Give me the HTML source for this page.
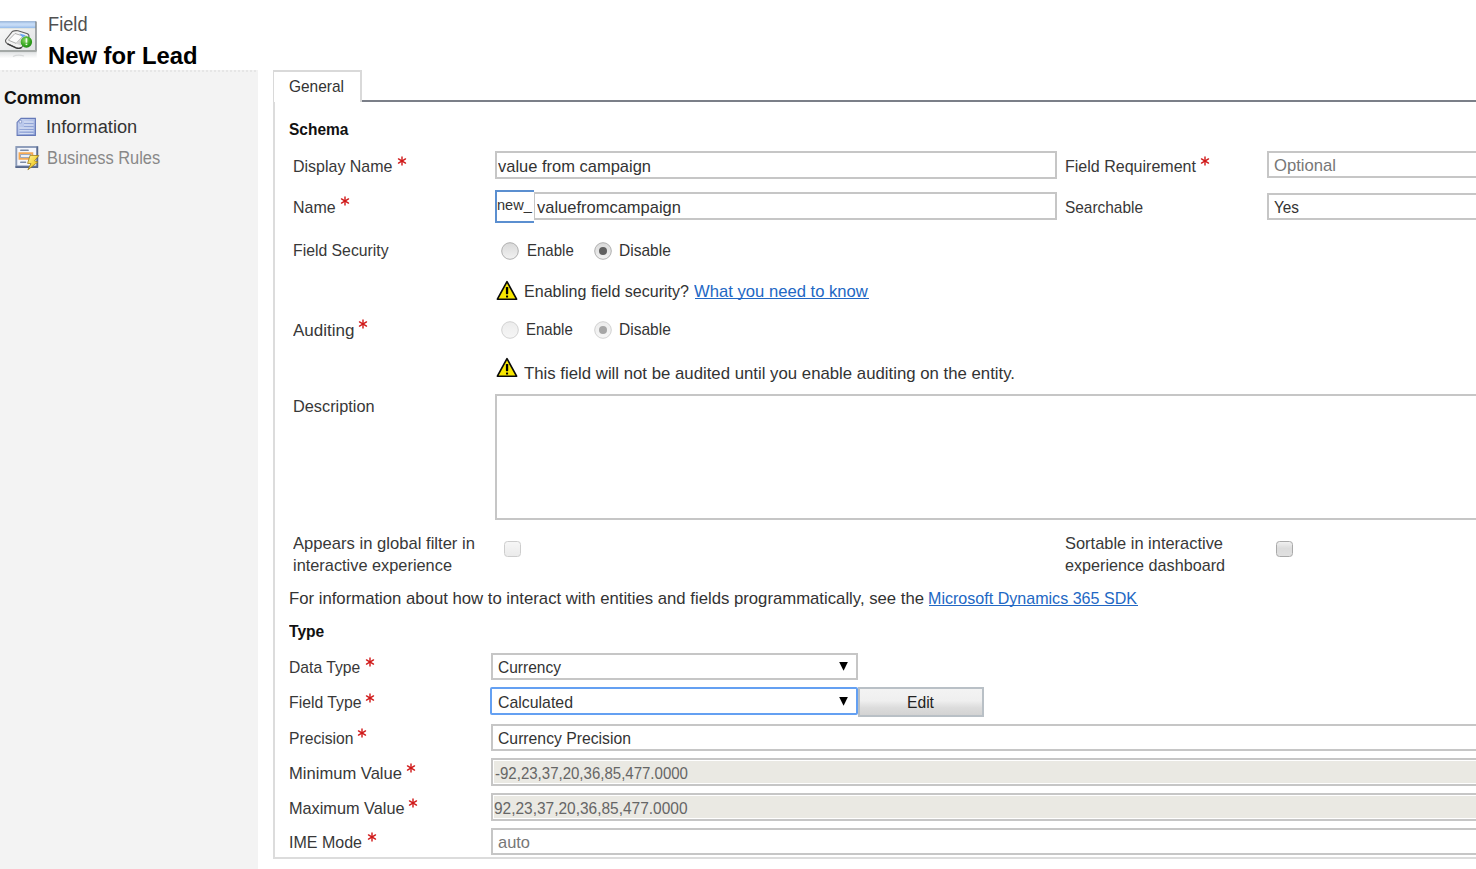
<!DOCTYPE html>
<html><head><meta charset="utf-8"><style>
html,body{margin:0;padding:0;background:#fff;width:1476px;height:869px;overflow:hidden;position:relative;}
body{font-family:"Liberation Sans",sans-serif;}
.t{position:absolute;white-space:nowrap;}
</style></head><body>
<svg style="position:absolute;left:0;top:19px" width="40" height="42" viewBox="0 19 40 42">
<defs>
<linearGradient id="tb" x1="0" y1="0" x2="0" y2="1"><stop offset="0" stop-color="#b4d0f2"/><stop offset="0.5" stop-color="#c9ddf6"/><stop offset="1" stop-color="#8db6e8"/></linearGradient>
<linearGradient id="bd" x1="0" y1="0" x2="1" y2="1"><stop offset="0" stop-color="#fafafa"/><stop offset="1" stop-color="#e0e2e4"/></linearGradient>
<linearGradient id="rf" x1="0" y1="0" x2="0" y2="1"><stop offset="0" stop-color="#e2e4e5"/><stop offset="1" stop-color="#ffffff"/></linearGradient>
<radialGradient id="gr" cx="0.4" cy="0.35" r="0.75"><stop offset="0" stop-color="#8ad866"/><stop offset="0.6" stop-color="#34a51f"/><stop offset="1" stop-color="#1b7e10"/></radialGradient>
</defs>
<rect x="-1" y="21.5" width="37" height="29" fill="url(#bd)"/>
<rect x="-1" y="21.5" width="37" height="7" fill="url(#tb)"/>
<rect x="-1" y="21.3" width="37" height="1" fill="#8fabd0"/>
<rect x="-1" y="28.4" width="37" height="0.8" fill="#f4eedc"/>
<rect x="35.3" y="21.5" width="1.4" height="29.5" fill="#7f8588"/>
<rect x="-1" y="50" width="37.7" height="2.4" fill="#a4a9a7"/>
<rect x="-1" y="52.4" width="37.7" height="6" fill="url(#rf)"/>
<path d="M13 56.5 Q18 54 24 56" fill="none" stroke="#d6d8d9" stroke-width="1.2"/>
<path d="M5.6 40 L12.2 31.6 Q15 30.2 18 30.8 L27.5 33.8 Q29.5 35 28.8 37.5 L21.5 47.5 Q19.5 49 16 47.8 L7.5 43.8 Q5 42.3 5.6 40 Z" fill="#f3f3f3" stroke="#606060" stroke-width="1.1"/>
<path d="M8.4 40.2 L15 33.5 L23 36 L16.2 43.4 Z" fill="#fbfbfb" stroke="#9a9a9a" stroke-width="0.8"/>
<path d="M16.2 43.4 L23 36 L27.6 35.2 L20.8 45.5 Z" fill="#d6d6d6"/>
<path d="M19.5 33.6 L25.8 35.3 L22.6 37.4 Z" fill="#6aa6f4"/>
<path d="M7.5 43.8 L16 47.8 Q19.5 49 21.5 47.5" fill="none" stroke="#3a3a3a" stroke-width="1.4"/>
<circle cx="26.4" cy="42" r="5.7" fill="url(#gr)"/>
<rect x="25.6" y="38.2" width="1.7" height="4.5" fill="#eaf8e6"/>
<rect x="25.6" y="43.7" width="1.7" height="1.4" fill="#eaf8e6"/>
</svg>
<div class="t" style="left:48.20px;top:11.57px;font-size:20px;line-height:25.00px;color:#505050;transform:scaleX(0.9124);transform-origin:0.00px 0;">Field</div>
<div class="t" style="left:47.80px;top:42.05px;font-size:23px;line-height:28.75px;color:#000;font-weight:bold;transform:scaleX(1.0360);transform-origin:0.00px 0;">New for Lead</div>
<div style="position:absolute;left:0px;top:70px;width:258px;height:799px;box-sizing:border-box;background:#f3f3f3;"></div>
<div style="position:absolute;left:2px;top:70px;width:256px;height:2px;box-sizing:border-box;background:repeating-linear-gradient(90deg,#e6e6e6 0 2px,transparent 2px 4px);"></div>
<div class="t" style="left:4.00px;top:86.71px;font-size:18px;line-height:22.50px;color:#111;font-weight:bold;transform:scaleX(0.9846);transform-origin:0.00px 0;">Common</div>
<svg style="position:absolute;left:14px;top:115px" width="28" height="58" viewBox="14 115 28 58">
<defs><linearGradient id="ig" x1="0" y1="0" x2="1" y2="1"><stop offset="0" stop-color="#cdd8f2"/><stop offset="1" stop-color="#93a8dc"/></linearGradient>
<linearGradient id="bolt" x1="0" y1="0" x2="1" y2="1"><stop offset="0" stop-color="#fff3a0"/><stop offset="0.5" stop-color="#f5d742"/><stop offset="1" stop-color="#d9a81c"/></linearGradient></defs>
<path d="M21 118.4 L35.4 118.4 L35.4 135.4 L17.1 135.4 L17.1 122.4 Z" fill="url(#ig)" stroke="#6579b8" stroke-width="1.1"/>
<path d="M19.2 120.4 L21.6 120.4 L21.6 123 L19.2 123 Z" fill="#eef2fb" stroke="#7083bd" stroke-width="0.6"/>
<rect x="24" y="121.6" width="9.5" height="1.2" fill="#e8eefa"/><rect x="24" y="122.8" width="9.5" height="0.8" fill="#7f93cc"/>
<rect x="24" y="124.6" width="9.5" height="1.2" fill="#e8eefa"/><rect x="24" y="125.8" width="9.5" height="0.8" fill="#7f93cc"/>
<rect x="19.5" y="127.6" width="14" height="1.2" fill="#e8eefa"/><rect x="19.5" y="128.8" width="14" height="0.8" fill="#7f93cc"/>
<rect x="19.5" y="130.4" width="14" height="1.2" fill="#e8eefa"/><rect x="19.5" y="131.6" width="14" height="0.8" fill="#7f93cc"/>
<rect x="19.5" y="133.0" width="14" height="0.8" fill="#dfe6f7"/>
<rect x="16.3" y="147" width="21" height="19.4" fill="#f4f6fc" stroke="#8a9ab8" stroke-width="1.9"/>
<path d="M37.3 146.5 L37.3 167.1 L15.4 167.1" fill="none" stroke="#56678b" stroke-width="1.6"/>
<rect x="20.1" y="149.6" width="8.7" height="1.4" rx="0.6" fill="#7d8ba5"/>
<rect x="19.5" y="153.2" width="12.8" height="5.6" fill="none" stroke="#f5aa55" stroke-width="1.9"/>
<rect x="20.6" y="154.6" width="10" height="2.8" fill="#eef1f7" stroke="#8c9ab3" stroke-width="0.8"/>
<rect x="20.1" y="161.6" width="6.1" height="1.4" rx="0.6" fill="#7d8ba5"/>
<path d="M30.1 155.3 L38.8 155.6 L34.5 160.8 L37.8 162 L27.9 169.8 L31 163.6 L27.6 163.4 Z" fill="url(#bolt)" stroke="#9b7a1a" stroke-width="0.8" stroke-linejoin="round"/>
</svg>
<div class="t" style="left:46.40px;top:115.51px;font-size:18px;line-height:22.50px;color:#333;transform:scaleX(1.0133);transform-origin:0.00px 0;">Information</div>
<div class="t" style="left:46.50px;top:147.21px;font-size:18px;line-height:22.50px;color:#888;transform:scaleX(0.9122);transform-origin:0.00px 0;">Business Rules</div>
<div style="position:absolute;left:273px;top:70px;width:89px;height:32px;box-sizing:border-box;border-top:2px solid #d9d9d9;border-left:1px solid #d9d9d9;border-right:2px solid #d9d9d9;background:#fff;"></div>
<div style="position:absolute;left:362px;top:100px;width:1114px;height:2px;box-sizing:border-box;background:#7b7f88;"></div>
<div style="position:absolute;left:273px;top:102px;width:1227px;height:757px;box-sizing:border-box;border-left:2px solid #dcdcdc;border-bottom:2px solid #dcdcdc;"></div>
<div class="t" style="left:288.90px;top:76.08px;font-size:17px;line-height:21.25px;color:#333;transform:scaleX(0.9091);transform-origin:0.00px 0;">General</div>
<div class="t" style="left:288.90px;top:119.28px;font-size:17px;line-height:21.25px;color:#111;font-weight:bold;transform:scaleX(0.9112);transform-origin:0.00px 0;">Schema</div>
<div class="t" style="left:293.40px;top:156.28px;font-size:17px;line-height:21.25px;color:#383838;transform:scaleX(0.9395);transform-origin:0.00px 0;">Display Name</div>
<svg style="position:absolute;left:396.30px;top:154.50px" width="12" height="12" viewBox="-6 -6 12 12"><g stroke="#d01818" stroke-width="1.4" stroke-linecap="round"><line x1="0" y1="-4.0" x2="0" y2="4.0"/><line x1="-3.5" y1="-2.05" x2="3.5" y2="2.05"/><line x1="-3.5" y1="2.05" x2="3.5" y2="-2.05"/></g></svg>
<div style="position:absolute;left:495px;top:151px;width:562px;height:28px;box-sizing:border-box;border:2px solid #c6c6c6;background:#fff;"></div>
<div class="t" style="left:498.30px;top:155.88px;font-size:17px;line-height:21.25px;color:#333;transform:scaleX(0.9696);transform-origin:0.00px 0;">value from campaign</div>
<div class="t" style="left:1065.10px;top:156.28px;font-size:17px;line-height:21.25px;color:#383838;transform:scaleX(0.9431);transform-origin:0.00px 0;">Field Requirement</div>
<svg style="position:absolute;left:1199.30px;top:154.50px" width="12" height="12" viewBox="-6 -6 12 12"><g stroke="#d01818" stroke-width="1.4" stroke-linecap="round"><line x1="0" y1="-4.0" x2="0" y2="4.0"/><line x1="-3.5" y1="-2.05" x2="3.5" y2="2.05"/><line x1="-3.5" y1="2.05" x2="3.5" y2="-2.05"/></g></svg>
<div style="position:absolute;left:1267px;top:151px;width:233px;height:27px;box-sizing:border-box;border:2px solid #c6c6c6;background:#fff;"></div>
<div class="t" style="left:1274.40px;top:155.28px;font-size:17px;line-height:21.25px;color:#777;transform:scaleX(0.9795);transform-origin:0.00px 0;">Optional</div>
<div class="t" style="left:293.40px;top:197.28px;font-size:17px;line-height:21.25px;color:#383838;transform:scaleX(0.9382);transform-origin:0.00px 0;">Name</div>
<svg style="position:absolute;left:339.20px;top:195.40px" width="12" height="12" viewBox="-6 -6 12 12"><g stroke="#d01818" stroke-width="1.4" stroke-linecap="round"><line x1="0" y1="-4.0" x2="0" y2="4.0"/><line x1="-3.5" y1="-2.05" x2="3.5" y2="2.05"/><line x1="-3.5" y1="2.05" x2="3.5" y2="-2.05"/></g></svg>
<div style="position:absolute;left:533px;top:192px;width:524px;height:28px;box-sizing:border-box;border:2px solid #c6c6c6;background:#fff;"></div>
<div style="position:absolute;left:495px;top:190px;width:38.5px;height:33px;box-sizing:border-box;border:2px solid #5b8fd0;border-right:none;background:#fff;"></div>
<div class="t" style="left:497.00px;top:196.22px;font-size:15px;line-height:18.75px;color:#333;transform:scaleX(0.9695);transform-origin:0.00px 0;">new_</div>
<div class="t" style="left:536.60px;top:197.28px;font-size:17px;line-height:21.25px;color:#333;transform:scaleX(0.9704);transform-origin:0.00px 0;">valuefromcampaign</div>
<div class="t" style="left:1065.10px;top:197.28px;font-size:17px;line-height:21.25px;color:#383838;transform:scaleX(0.9070);transform-origin:0.00px 0;">Searchable</div>
<div style="position:absolute;left:1267px;top:193px;width:233px;height:27px;box-sizing:border-box;border:2px solid #c6c6c6;background:#fff;"></div>
<div class="t" style="left:1274.40px;top:197.28px;font-size:17px;line-height:21.25px;color:#333;transform:scaleX(0.9025);transform-origin:0.00px 0;">Yes</div>
<div class="t" style="left:293.40px;top:239.98px;font-size:17px;line-height:21.25px;color:#383838;transform:scaleX(0.9282);transform-origin:0.00px 0;">Field Security</div>
<svg style="position:absolute;left:499.9px;top:240.9px" width="20" height="20"><defs><linearGradient id="rg509250" x1="0" y1="0" x2="0" y2="1"><stop offset="0" stop-color="#d9d9d9"/><stop offset="1" stop-color="#f2f2f2"/></linearGradient></defs><circle cx="10" cy="10" r="8.3" fill="url(#rg509250)" stroke="#b0b0b0" stroke-width="1"/></svg>
<svg style="position:absolute;left:593px;top:240.9px" width="20" height="20"><defs><linearGradient id="rg603250" x1="0" y1="0" x2="0" y2="1"><stop offset="0" stop-color="#d9d9d9"/><stop offset="1" stop-color="#f2f2f2"/></linearGradient></defs><circle cx="10" cy="10" r="8.3" fill="url(#rg603250)" stroke="#b0b0b0" stroke-width="1"/><circle cx="10" cy="10" r="4" fill="#5f5f5f"/></svg>
<div class="t" style="left:526.70px;top:240.18px;font-size:17px;line-height:21.25px;color:#333;transform:scaleX(0.8828);transform-origin:0.00px 0;">Enable</div>
<div class="t" style="left:619.20px;top:240.18px;font-size:17px;line-height:21.25px;color:#333;transform:scaleX(0.9136);transform-origin:0.00px 0;">Disable</div>
<svg style="position:absolute;left:496px;top:280px" width="24" height="22" viewBox="0 0 24 22"><path d="M11 1.6 L20.6 19.2 L1.4 19.2 Z" fill="#f8e700" stroke="#0a0a0a" stroke-width="1.65" stroke-linejoin="round"/><rect x="9.9" y="7" width="2.3" height="7.2" rx="0.6" fill="#000"/><rect x="10" y="15.6" width="2.1" height="1.8" rx="0.5" fill="#000"/></svg>
<div class="t" style="left:524.00px;top:280.98px;font-size:17px;line-height:21.25px;color:#333;transform:scaleX(0.9439);transform-origin:0.00px 0;">Enabling field security?</div>
<div class="t" style="left:694.40px;top:280.78px;font-size:17px;line-height:21.25px;color:#2268c4;transform:scaleX(0.9786);transform-origin:0.00px 0;">What you need to know</div>
<div style="position:absolute;left:695px;top:298px;width:174px;height:1.1999999999999886px;box-sizing:border-box;background:#2268c4;"></div>
<div class="t" style="left:292.90px;top:319.98px;font-size:17px;line-height:21.25px;color:#383838;transform:scaleX(1.0016);transform-origin:0.00px 0;">Auditing</div>
<svg style="position:absolute;left:357.20px;top:317.60px" width="12" height="12" viewBox="-6 -6 12 12"><g stroke="#d01818" stroke-width="1.4" stroke-linecap="round"><line x1="0" y1="-4.0" x2="0" y2="4.0"/><line x1="-3.5" y1="-2.05" x2="3.5" y2="2.05"/><line x1="-3.5" y1="2.05" x2="3.5" y2="-2.05"/></g></svg>
<svg style="position:absolute;left:499.9px;top:319.7px" width="20" height="20"><defs><linearGradient id="rg509329" x1="0" y1="0" x2="0" y2="1"><stop offset="0" stop-color="#ececec"/><stop offset="1" stop-color="#f6f6f6"/></linearGradient></defs><circle cx="10" cy="10" r="8.3" fill="url(#rg509329)" stroke="#d2d2d2" stroke-width="1"/></svg>
<svg style="position:absolute;left:593px;top:319.7px" width="20" height="20"><defs><linearGradient id="rg603329" x1="0" y1="0" x2="0" y2="1"><stop offset="0" stop-color="#ececec"/><stop offset="1" stop-color="#f6f6f6"/></linearGradient></defs><circle cx="10" cy="10" r="8.3" fill="url(#rg603329)" stroke="#d2d2d2" stroke-width="1"/><circle cx="10" cy="10" r="4" fill="#a6a6a6"/></svg>
<div class="t" style="left:526.20px;top:319.18px;font-size:17px;line-height:21.25px;color:#333;transform:scaleX(0.8828);transform-origin:0.00px 0;">Enable</div>
<div class="t" style="left:619.00px;top:319.18px;font-size:17px;line-height:21.25px;color:#333;transform:scaleX(0.9136);transform-origin:0.00px 0;">Disable</div>
<svg style="position:absolute;left:496px;top:357px" width="24" height="22" viewBox="0 0 24 22"><path d="M11 1.6 L20.6 19.2 L1.4 19.2 Z" fill="#f8e700" stroke="#0a0a0a" stroke-width="1.65" stroke-linejoin="round"/><rect x="9.9" y="7" width="2.3" height="7.2" rx="0.6" fill="#000"/><rect x="10" y="15.6" width="2.1" height="1.8" rx="0.5" fill="#000"/></svg>
<div class="t" style="left:524.40px;top:363.28px;font-size:17px;line-height:21.25px;color:#333;transform:scaleX(0.9865);transform-origin:0.00px 0;">This field will not be audited until you enable auditing on the entity.</div>
<div class="t" style="left:293.10px;top:396.18px;font-size:17px;line-height:21.25px;color:#383838;transform:scaleX(0.9600);transform-origin:0.00px 0;">Description</div>
<div style="position:absolute;left:495px;top:394px;width:1005px;height:126px;box-sizing:border-box;border:2px solid #c6c6c6;background:#fff;"></div>
<div class="t" style="left:292.70px;top:533.28px;font-size:17px;line-height:21.25px;color:#383838;transform:scaleX(0.9774);transform-origin:0.00px 0;">Appears in global filter in</div>
<div class="t" style="left:292.70px;top:554.88px;font-size:17px;line-height:21.25px;color:#383838;transform:scaleX(0.9613);transform-origin:0.00px 0;">interactive experience</div>
<div style="position:absolute;left:504.1px;top:540.9px;width:16.5px;height:16.5px;box-sizing:border-box;border:1.5px solid #cdcdcd;border-radius:3.5px;background:linear-gradient(#f6f6f6,#ebebeb);"></div>
<div class="t" style="left:1064.90px;top:533.28px;font-size:17px;line-height:21.25px;color:#383838;transform:scaleX(0.9664);transform-origin:0.00px 0;">Sortable in interactive</div>
<div class="t" style="left:1064.90px;top:554.88px;font-size:17px;line-height:21.25px;color:#383838;transform:scaleX(0.9512);transform-origin:0.00px 0;">experience dashboard</div>
<div style="position:absolute;left:1276.1px;top:540.9px;width:16.5px;height:16.5px;box-sizing:border-box;border:1.6px solid #a9a9a9;border-radius:3.5px;background:linear-gradient(#f0f0f0,#dcdcdc 45%,#e0e0e0);"></div>
<div class="t" style="left:289.10px;top:588.08px;font-size:17px;line-height:21.25px;color:#333;transform:scaleX(0.9830);transform-origin:0.00px 0;">For information about how to interact with entities and fields programmatically, see the</div>
<div class="t" style="left:928.40px;top:588.08px;font-size:17px;line-height:21.25px;color:#2268c4;transform:scaleX(0.9453);transform-origin:0.00px 0;">Microsoft Dynamics 365 SDK</div>
<div style="position:absolute;left:929px;top:605px;width:209px;height:1.2999999999999545px;box-sizing:border-box;background:#2268c4;"></div>
<div class="t" style="left:289.40px;top:620.88px;font-size:17px;line-height:21.25px;color:#111;font-weight:bold;transform:scaleX(0.9193);transform-origin:0.00px 0;">Type</div>
<div class="t" style="left:289.40px;top:656.98px;font-size:17px;line-height:21.25px;color:#383838;transform:scaleX(0.9223);transform-origin:0.00px 0;">Data Type</div>
<svg style="position:absolute;left:364.10px;top:655.60px" width="12" height="12" viewBox="-6 -6 12 12"><g stroke="#d01818" stroke-width="1.4" stroke-linecap="round"><line x1="0" y1="-4.0" x2="0" y2="4.0"/><line x1="-3.5" y1="-2.05" x2="3.5" y2="2.05"/><line x1="-3.5" y1="2.05" x2="3.5" y2="-2.05"/></g></svg>
<div style="position:absolute;left:491px;top:653px;width:367px;height:27px;box-sizing:border-box;border:2px solid #c6c6c6;background:#fff;"></div>
<div class="t" style="left:498.40px;top:657.28px;font-size:17px;line-height:21.25px;color:#333;transform:scaleX(0.9130);transform-origin:0.00px 0;">Currency</div>
<svg style="position:absolute;left:836px;top:659px" width="16" height="16" viewBox="836 659 16 16"><path d="M839.2 662 L847.9 662 L843.55 670.8 Z" fill="#000"/></svg>
<div class="t" style="left:289.40px;top:692.08px;font-size:17px;line-height:21.25px;color:#383838;transform:scaleX(0.9283);transform-origin:0.00px 0;">Field Type</div>
<svg style="position:absolute;left:364.20px;top:692.20px" width="12" height="12" viewBox="-6 -6 12 12"><g stroke="#d01818" stroke-width="1.4" stroke-linecap="round"><line x1="0" y1="-4.0" x2="0" y2="4.0"/><line x1="-3.5" y1="-2.05" x2="3.5" y2="2.05"/><line x1="-3.5" y1="2.05" x2="3.5" y2="-2.05"/></g></svg>
<div style="position:absolute;left:490.4px;top:687px;width:367.6px;height:28px;box-sizing:border-box;border:2px solid #64a0f2;border-radius:2px;background:#fff;"></div>
<div class="t" style="left:498.40px;top:691.88px;font-size:17px;line-height:21.25px;color:#333;transform:scaleX(0.9340);transform-origin:0.00px 0;">Calculated</div>
<svg style="position:absolute;left:836px;top:694px" width="16" height="16" viewBox="836 694 16 16"><path d="M839.2 697 L847.9 697 L843.55 705.8 Z" fill="#000"/></svg>
<div style="position:absolute;left:858.2px;top:687px;width:125.79999999999995px;height:29.5px;box-sizing:border-box;border:2px solid #b9c0c6;background:linear-gradient(#f3f3f3 0%,#efefef 45%,#dcdcdc 72%,#d3d3d3 100%);"></div>
<div class="t" style="left:907.30px;top:693.15px;font-size:16px;line-height:20.00px;color:#222;transform:scaleX(0.9783);transform-origin:0.00px 0;">Edit</div>
<div class="t" style="left:289.20px;top:727.88px;font-size:17px;line-height:21.25px;color:#383838;transform:scaleX(0.9227);transform-origin:0.00px 0;">Precision</div>
<svg style="position:absolute;left:356.20px;top:727.00px" width="12" height="12" viewBox="-6 -6 12 12"><g stroke="#d01818" stroke-width="1.4" stroke-linecap="round"><line x1="0" y1="-4.0" x2="0" y2="4.0"/><line x1="-3.5" y1="-2.05" x2="3.5" y2="2.05"/><line x1="-3.5" y1="2.05" x2="3.5" y2="-2.05"/></g></svg>
<div style="position:absolute;left:491px;top:724px;width:1009px;height:27px;box-sizing:border-box;border:2px solid #c6c6c6;background:#fff;"></div>
<div class="t" style="left:497.90px;top:727.88px;font-size:17px;line-height:21.25px;color:#333;transform:scaleX(0.9262);transform-origin:0.00px 0;">Currency Precision</div>
<div class="t" style="left:289.20px;top:763.28px;font-size:17px;line-height:21.25px;color:#383838;transform:scaleX(0.9750);transform-origin:0.00px 0;">Minimum Value</div>
<svg style="position:absolute;left:405.10px;top:762.00px" width="12" height="12" viewBox="-6 -6 12 12"><g stroke="#d01818" stroke-width="1.4" stroke-linecap="round"><line x1="0" y1="-4.0" x2="0" y2="4.0"/><line x1="-3.5" y1="-2.05" x2="3.5" y2="2.05"/><line x1="-3.5" y1="2.05" x2="3.5" y2="-2.05"/></g></svg>
<div style="position:absolute;left:491px;top:758px;width:1009px;height:28px;box-sizing:border-box;border:2px solid #c6c6c6;background:#fff;"></div>
<div style="position:absolute;left:494px;top:761px;width:1006px;height:22px;box-sizing:border-box;background:#eae9e3;"></div>
<div class="t" style="left:494.70px;top:763.28px;font-size:17px;line-height:21.25px;color:#666;transform:scaleX(0.8837);transform-origin:0.00px 0;">-92,23,37,20,36,85,477.0000</div>
<div class="t" style="left:289.20px;top:798.18px;font-size:17px;line-height:21.25px;color:#383838;transform:scaleX(0.9577);transform-origin:0.00px 0;">Maximum Value</div>
<svg style="position:absolute;left:407.10px;top:797.00px" width="12" height="12" viewBox="-6 -6 12 12"><g stroke="#d01818" stroke-width="1.4" stroke-linecap="round"><line x1="0" y1="-4.0" x2="0" y2="4.0"/><line x1="-3.5" y1="-2.05" x2="3.5" y2="2.05"/><line x1="-3.5" y1="2.05" x2="3.5" y2="-2.05"/></g></svg>
<div style="position:absolute;left:491px;top:793px;width:1009px;height:28px;box-sizing:border-box;border:2px solid #c6c6c6;background:#fff;"></div>
<div style="position:absolute;left:494px;top:796px;width:1006px;height:22px;box-sizing:border-box;background:#eae9e3;"></div>
<div class="t" style="left:493.80px;top:798.18px;font-size:17px;line-height:21.25px;color:#666;transform:scaleX(0.9097);transform-origin:0.00px 0;">92,23,37,20,36,85,477.0000</div>
<div class="t" style="left:289.20px;top:832.48px;font-size:17px;line-height:21.25px;color:#383838;transform:scaleX(0.9419);transform-origin:0.00px 0;">IME Mode</div>
<svg style="position:absolute;left:366.20px;top:831.00px" width="12" height="12" viewBox="-6 -6 12 12"><g stroke="#d01818" stroke-width="1.4" stroke-linecap="round"><line x1="0" y1="-4.0" x2="0" y2="4.0"/><line x1="-3.5" y1="-2.05" x2="3.5" y2="2.05"/><line x1="-3.5" y1="2.05" x2="3.5" y2="-2.05"/></g></svg>
<div style="position:absolute;left:491px;top:828px;width:1009px;height:27px;box-sizing:border-box;border:2px solid #c6c6c6;background:#fff;"></div>
<div class="t" style="left:498.40px;top:831.88px;font-size:17px;line-height:21.25px;color:#777;transform:scaleX(0.9668);transform-origin:0.00px 0;">auto</div>
</body></html>
